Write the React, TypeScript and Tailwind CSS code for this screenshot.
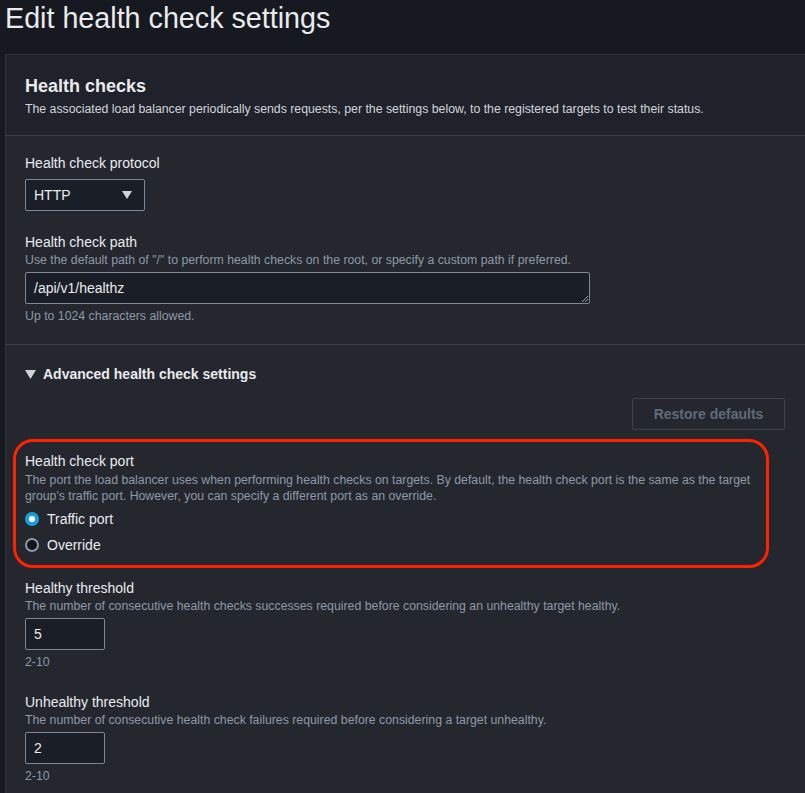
import React from 'react';

function Field({
  label,
  desc,
  children,
  hint,
}: {
  label: string;
  desc?: React.ReactNode;
  children: React.ReactNode;
  hint?: string;
}) {
  return (
    <div>
      <div className="text-[14px] leading-[20px] text-[#e9ebed]">{label}</div>
      {desc && <div className="text-[12.3px] leading-[16px] text-[#8d99a8]">{desc}</div>}
      <div className={desc ? 'mt-[4px]' : 'mt-[6px]'}>{children}</div>
      {hint && <div className="mt-[4px] text-[12.3px] leading-[16px] text-[#8d99a8]">{hint}</div>}
    </div>
  );
}

function Radio({ checked, label }: { checked?: boolean; label: string }) {
  return (
    <div className="flex items-center gap-[8px] h-[26px]">
      {checked ? (
        <span className="w-[14px] h-[14px] rounded-full bg-[#1a9fd6] flex items-center justify-center">
          <span className="w-[6px] h-[6px] rounded-full bg-white" />
        </span>
      ) : (
        <span className="w-[14px] h-[14px] rounded-full border-2 border-[#8d99a8] bg-[#0f141a]" />
      )}
      <span className="text-[14px] text-[#e9ebed]">{label}</span>
    </div>
  );
}

export default function App() {
  return (
    <div className="min-h-screen bg-[#16191f] overflow-hidden font-['Liberation_Sans',Arial,sans-serif]">
      <h1 className="pl-[5px] text-[28.7px] leading-[36px] text-[#e9ebed]">Edit health check settings</h1>

      <div className="ml-[5px] mt-[18px] bg-[#24272e] border-l border-t border-[#2f333b]">
        <div className="bg-[#1f222a] pl-[19px] pr-[20px] pt-[19px] pb-[18px] border-b border-[#3b3f47]">
          <h2 className="text-[18px] leading-[24px] font-bold text-[#e9ebed]">Health checks</h2>
          <p className="mt-[3px] text-[12.3px] leading-[16px] text-[#d1d5db]">
            The associated load balancer periodically sends requests, per the settings below, to the registered targets to test their status.
          </p>
        </div>

        <div className="pl-[19px] pr-[20px] pt-[17px] pb-[20px] flex flex-col gap-[21px] border-b border-[#3b3f47]">
          <Field label="Health check protocol">
            <div className="w-[120px] h-[32px] border border-[#7d8998] rounded-[2px] bg-[#1a1e26] flex items-center justify-between pl-[8px] pr-[12px]">
              <span className="text-[14px] text-[#e9ebed]">HTTP</span>
              <svg width="10" height="8" viewBox="0 0 10 8">
                <path d="M0 0h10L5 8z" fill="#d1d5db" />
              </svg>
            </div>
          </Field>

          <Field
            label="Health check path"
            desc={'Use the default path of "/" to perform health checks on the root, or specify a custom path if preferred.'}
            hint="Up to 1024 characters allowed."
          >
            <div className="relative w-[565px] h-[32px] border border-[#7d8998] rounded-[2px] bg-[#1a1e26] flex items-center pl-[8px]">
              <span className="text-[14px] text-[#e9ebed]">/api/v1/healthz</span>
              <svg className="absolute right-[1px] bottom-[1px]" width="7" height="7" viewBox="0 0 7 7">
                <path d="M1 7L7 1M4 7L7 4" stroke="#c4c9cf" strokeWidth="0.8" />
              </svg>
            </div>
          </Field>
        </div>

        <div className="pl-[19px] pr-[20px] pt-[20px] pb-[24px]">
          <div className="flex items-center gap-[7px] h-[18px]">
            <svg width="11" height="9" viewBox="0 0 11 9">
              <path d="M0 0h11L5.5 9z" fill="#d1d5db" />
            </svg>
            <span className="text-[14px] font-bold text-[#e9ebed]">Advanced health check settings</span>
          </div>

          <div className="flex justify-end mt-[15px]">
            <div className="w-[153px] h-[32px] border border-[#3e434b] rounded-[2px] flex items-center justify-center text-[14px] font-bold text-[#5f6b7a]">
              Restore defaults
            </div>
          </div>

          <div className="mt-[9px] -ml-[12px] w-[756px] border-[3px] border-[#ff2200] rounded-[20px] pl-[9px] pr-[10px] pt-[9px] pb-[7px]">
            <div className="text-[14px] leading-[20px] text-[#e9ebed]">Health check port</div>
            <div className="mt-[1px] text-[12.3px] leading-[16px] text-[#8d99a8]">
              The port the load balancer uses when performing health checks on targets. By default, the health check port is the same as the target group's traffic port. However, you can specify a different port as an override.
            </div>
            <div className="mt-[2px]">
              <Radio checked label="Traffic port" />
              <Radio label="Override" />
            </div>
          </div>

          <div className="mt-[10px] flex flex-col gap-[22px]">
            <Field
              label="Healthy threshold"
              desc="The number of consecutive health checks successes required before considering an unhealthy target healthy."
              hint="2-10"
            >
              <div className="w-[80px] h-[32px] border border-[#7d8998] rounded-[2px] bg-[#1a1e26] flex items-center pl-[8px]">
                <span className="text-[14px] text-[#e9ebed]">5</span>
              </div>
            </Field>
            <Field
              label="Unhealthy threshold"
              desc="The number of consecutive health check failures required before considering a target unhealthy."
              hint="2-10"
            >
              <div className="w-[80px] h-[32px] border border-[#7d8998] rounded-[2px] bg-[#1a1e26] flex items-center pl-[8px]">
                <span className="text-[14px] text-[#e9ebed]">2</span>
              </div>
            </Field>
          </div>
        </div>
      </div>
    </div>
  );
}
